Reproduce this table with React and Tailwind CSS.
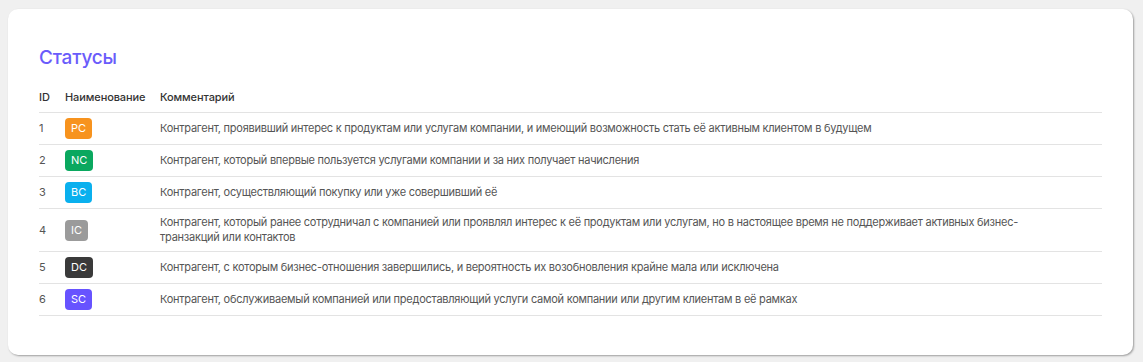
const statuses = [
    { id: 1, code: 'PC', color: 'bg-[#f7931e]', text: 'Контрагент, проявивший интерес к продуктам или услугам компании, и имеющий возможность стать её активным клиентом в будущем' },
    { id: 2, code: 'NC', color: 'bg-[#0aa85f]', text: 'Контрагент, который впервые пользуется услугами компании и за них получает начисления' },
    { id: 3, code: 'BC', color: 'bg-[#0ab0ee]', text: 'Контрагент, осуществляющий покупку или уже совершивший её' },
    { id: 4, code: 'IC', color: 'bg-[#9b9b9b]', text: 'Контрагент, который ранее сотрудничал с компанией или проявлял интерес к её продуктам или услугам, но в настоящее время не поддерживает активных бизнес-транзакций или контактов' },
    { id: 5, code: 'DC', color: 'bg-[#3a3a3a]', text: 'Контрагент, с которым бизнес-отношения завершились, и вероятность их возобновления крайне мала или исключена' },
    { id: 6, code: 'SC', color: 'bg-[#6753ff]', text: 'Контрагент, обслуживаемый компанией или предоставляющий услуги самой компании или другим клиентам в её рамках' },
]

export default function App() {
    return (
        <div className="min-h-[362px] bg-[#f0f0f0] pt-[9px] pl-2 pr-[10px] pb-[7px]" style={{ fontFamily: 'Inter, "Noto Sans", sans-serif' }}>
            <div className="bg-white rounded-[10px] shadow-[1px_1px_2px_rgba(0,0,0,0.35)] px-[31px] pt-[36px] pb-[39px]">
                <h2 className="text-[19px] leading-[26px] font-medium tracking-[-0.2px] text-[#6a5cfb] mb-[19px]">Статусы</h2>
                <table className="w-full border-collapse text-[11px] leading-[15px]">
                    <thead>
                        <tr className="border-b border-[#e3e3e3]">
                            <th className="w-[26px] text-left font-medium text-[#333] pb-[7px]">ID</th>
                            <th className="w-[95px] text-left font-medium text-[#333] pb-[7px] tracking-[-0.1px]">Наименование</th>
                            <th className="text-left font-medium text-[#333] pb-[7px] tracking-[-0.1px]">Комментарий</th>
                        </tr>
                    </thead>
                    <tbody>
                        {statuses.map(item => (
                            <tr key={item.id} className="border-b border-[#e3e3e3]">
                                <td className="py-[5px] text-[#555] align-middle">{item.id}</td>
                                <td className="py-[5px] align-middle">
                                    <span className={`inline-flex items-center h-[21px] px-[6px] rounded-[4px] text-white ${item.color}`}>{item.code}</span>
                                </td>
                                <td className="py-[6px] pr-[30px] text-[#555] tracking-[-0.25px] align-middle">{item.text}</td>
                            </tr>
                        ))}
                    </tbody>
                </table>
            </div>
        </div>
    )
}
